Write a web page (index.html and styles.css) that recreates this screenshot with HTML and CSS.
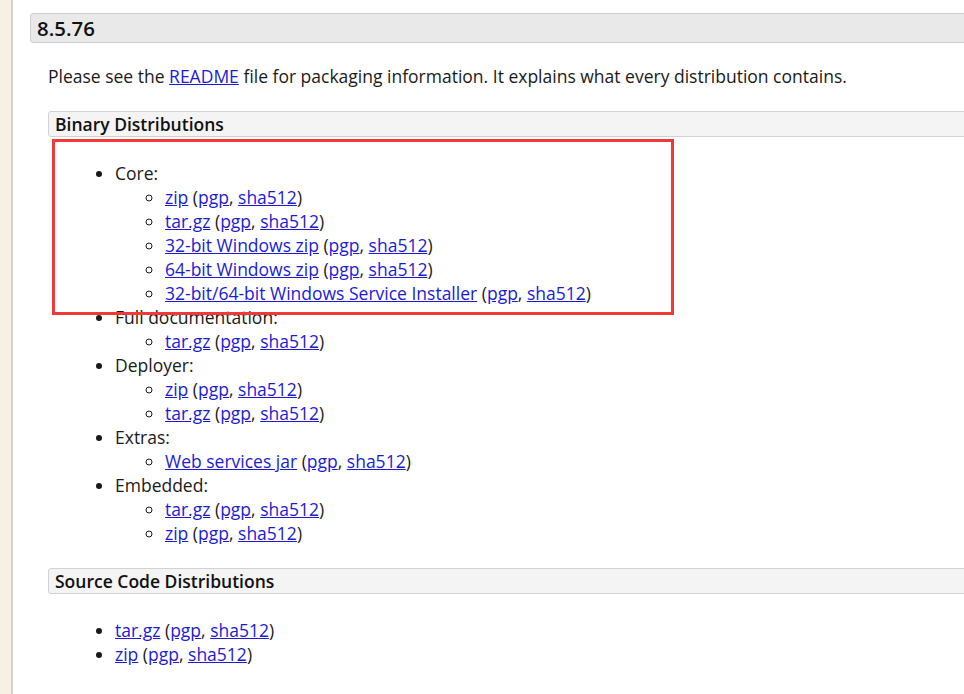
FILE: index.html
```html
<!DOCTYPE html>
<html>
<head>
<meta charset="utf-8">
<link rel="stylesheet" href="styles.css">
</head>
<body>
<div class="page">
  <div class="strip"></div>
  <main class="main">
    <h3 class="version">8.5.76</h3>
    <div class="section">
      <p class="intro">Please see the <a href="#">README</a> file for packaging information. It explains what every distribution contains.</p>
      <h4 class="sub">Binary Distributions</h4>
      <div class="binary">
        <ul class="outer">
          <li>Core:
            <ul class="inner">
              <li><a href="#">zip</a> (<a href="#">pgp</a>, <a href="#">sha512</a>)</li>
              <li><a href="#">tar.gz</a> (<a href="#">pgp</a>, <a href="#">sha512</a>)</li>
              <li><a href="#">32-bit Windows zip</a> (<a href="#">pgp</a>, <a href="#">sha512</a>)</li>
              <li><a href="#">64-bit Windows zip</a> (<a href="#">pgp</a>, <a href="#">sha512</a>)</li>
              <li><a href="#">32-bit/64-bit Windows Service Installer</a> (<a href="#">pgp</a>, <a href="#">sha512</a>)</li>
            </ul>
          </li>
          <li>Full documentation:
            <ul class="inner">
              <li><a href="#">tar.gz</a> (<a href="#">pgp</a>, <a href="#">sha512</a>)</li>
            </ul>
          </li>
          <li>Deployer:
            <ul class="inner">
              <li><a href="#">zip</a> (<a href="#">pgp</a>, <a href="#">sha512</a>)</li>
              <li><a href="#">tar.gz</a> (<a href="#">pgp</a>, <a href="#">sha512</a>)</li>
            </ul>
          </li>
          <li>Extras:
            <ul class="inner">
              <li><a href="#">Web services jar</a> (<a href="#">pgp</a>, <a href="#">sha512</a>)</li>
            </ul>
          </li>
          <li>Embedded:
            <ul class="inner">
              <li><a href="#">tar.gz</a> (<a href="#">pgp</a>, <a href="#">sha512</a>)</li>
              <li><a href="#">zip</a> (<a href="#">pgp</a>, <a href="#">sha512</a>)</li>
            </ul>
          </li>
        </ul>
        <div class="highlight"></div>
      </div>
      <h4 class="sub">Source Code Distributions</h4>
      <ul class="outer source">
        <li><a href="#">tar.gz</a> (<a href="#">pgp</a>, <a href="#">sha512</a>)</li>
        <li><a href="#">zip</a> (<a href="#">pgp</a>, <a href="#">sha512</a>)</li>
      </ul>
    </div>
  </main>
</div>
</body>
</html>
```
FILE: styles.css
```css
html, body {
  margin: 0;
  padding: 0;
  height: 100%;
  overflow: hidden;
  background: #ffffff;
}
body {
  font-family: "Open Sans", "Liberation Sans", sans-serif;
  font-size: 17.5px;
  line-height: 24px;
  color: #1a1a1a;
}
.page {
  display: flex;
  min-height: 100%;
}
.strip {
  width: 11px;
  flex: none;
  background: #f7f0e4;
  border-right: 2px solid #d6d2cb;
}
.main {
  flex: none;
  width: 1000px;
  padding-left: 17px;
}
.version {
  margin: 13px 0 0 0;
  height: 28px;
  line-height: 28px;
  padding-left: 6px;
  font-size: 20.4px;
  font-weight: 600;
  color: #111;
  background: #e9e9e9;
  border: 1px solid #cfcfcf;
  border-radius: 3px;
}
.section {
  padding-left: 18px;
}
.intro {
  margin: 21px 0 0 0;
}
a {
  color: #1b1bd6;
  text-decoration: underline;
}
.sub {
  margin: 23px 0 0 0;
  height: 24px;
  line-height: 24px;
  padding-left: 6px;
  font-size: 17.5px;
  font-weight: 600;
  color: #111;
  background: #f4f4f4;
  border: 1px solid #d2d2d2;
  border-radius: 3px;
}
.binary {
  position: relative;
}
.outer {
  margin: 24px 0 0 0;
  padding-left: 67px;
  list-style: disc;
}
.inner {
  margin: 0;
  padding-left: 50px;
  list-style: circle;
}
.binary .outer {
  margin-bottom: 23px;
}
.source {
  margin-top: 24px;
}
.highlight {
  position: absolute;
  left: 4px;
  top: -22px;
  width: 616px;
  height: 170px;
  border: 3px solid #f03a3a;
  pointer-events: none;
}
```
